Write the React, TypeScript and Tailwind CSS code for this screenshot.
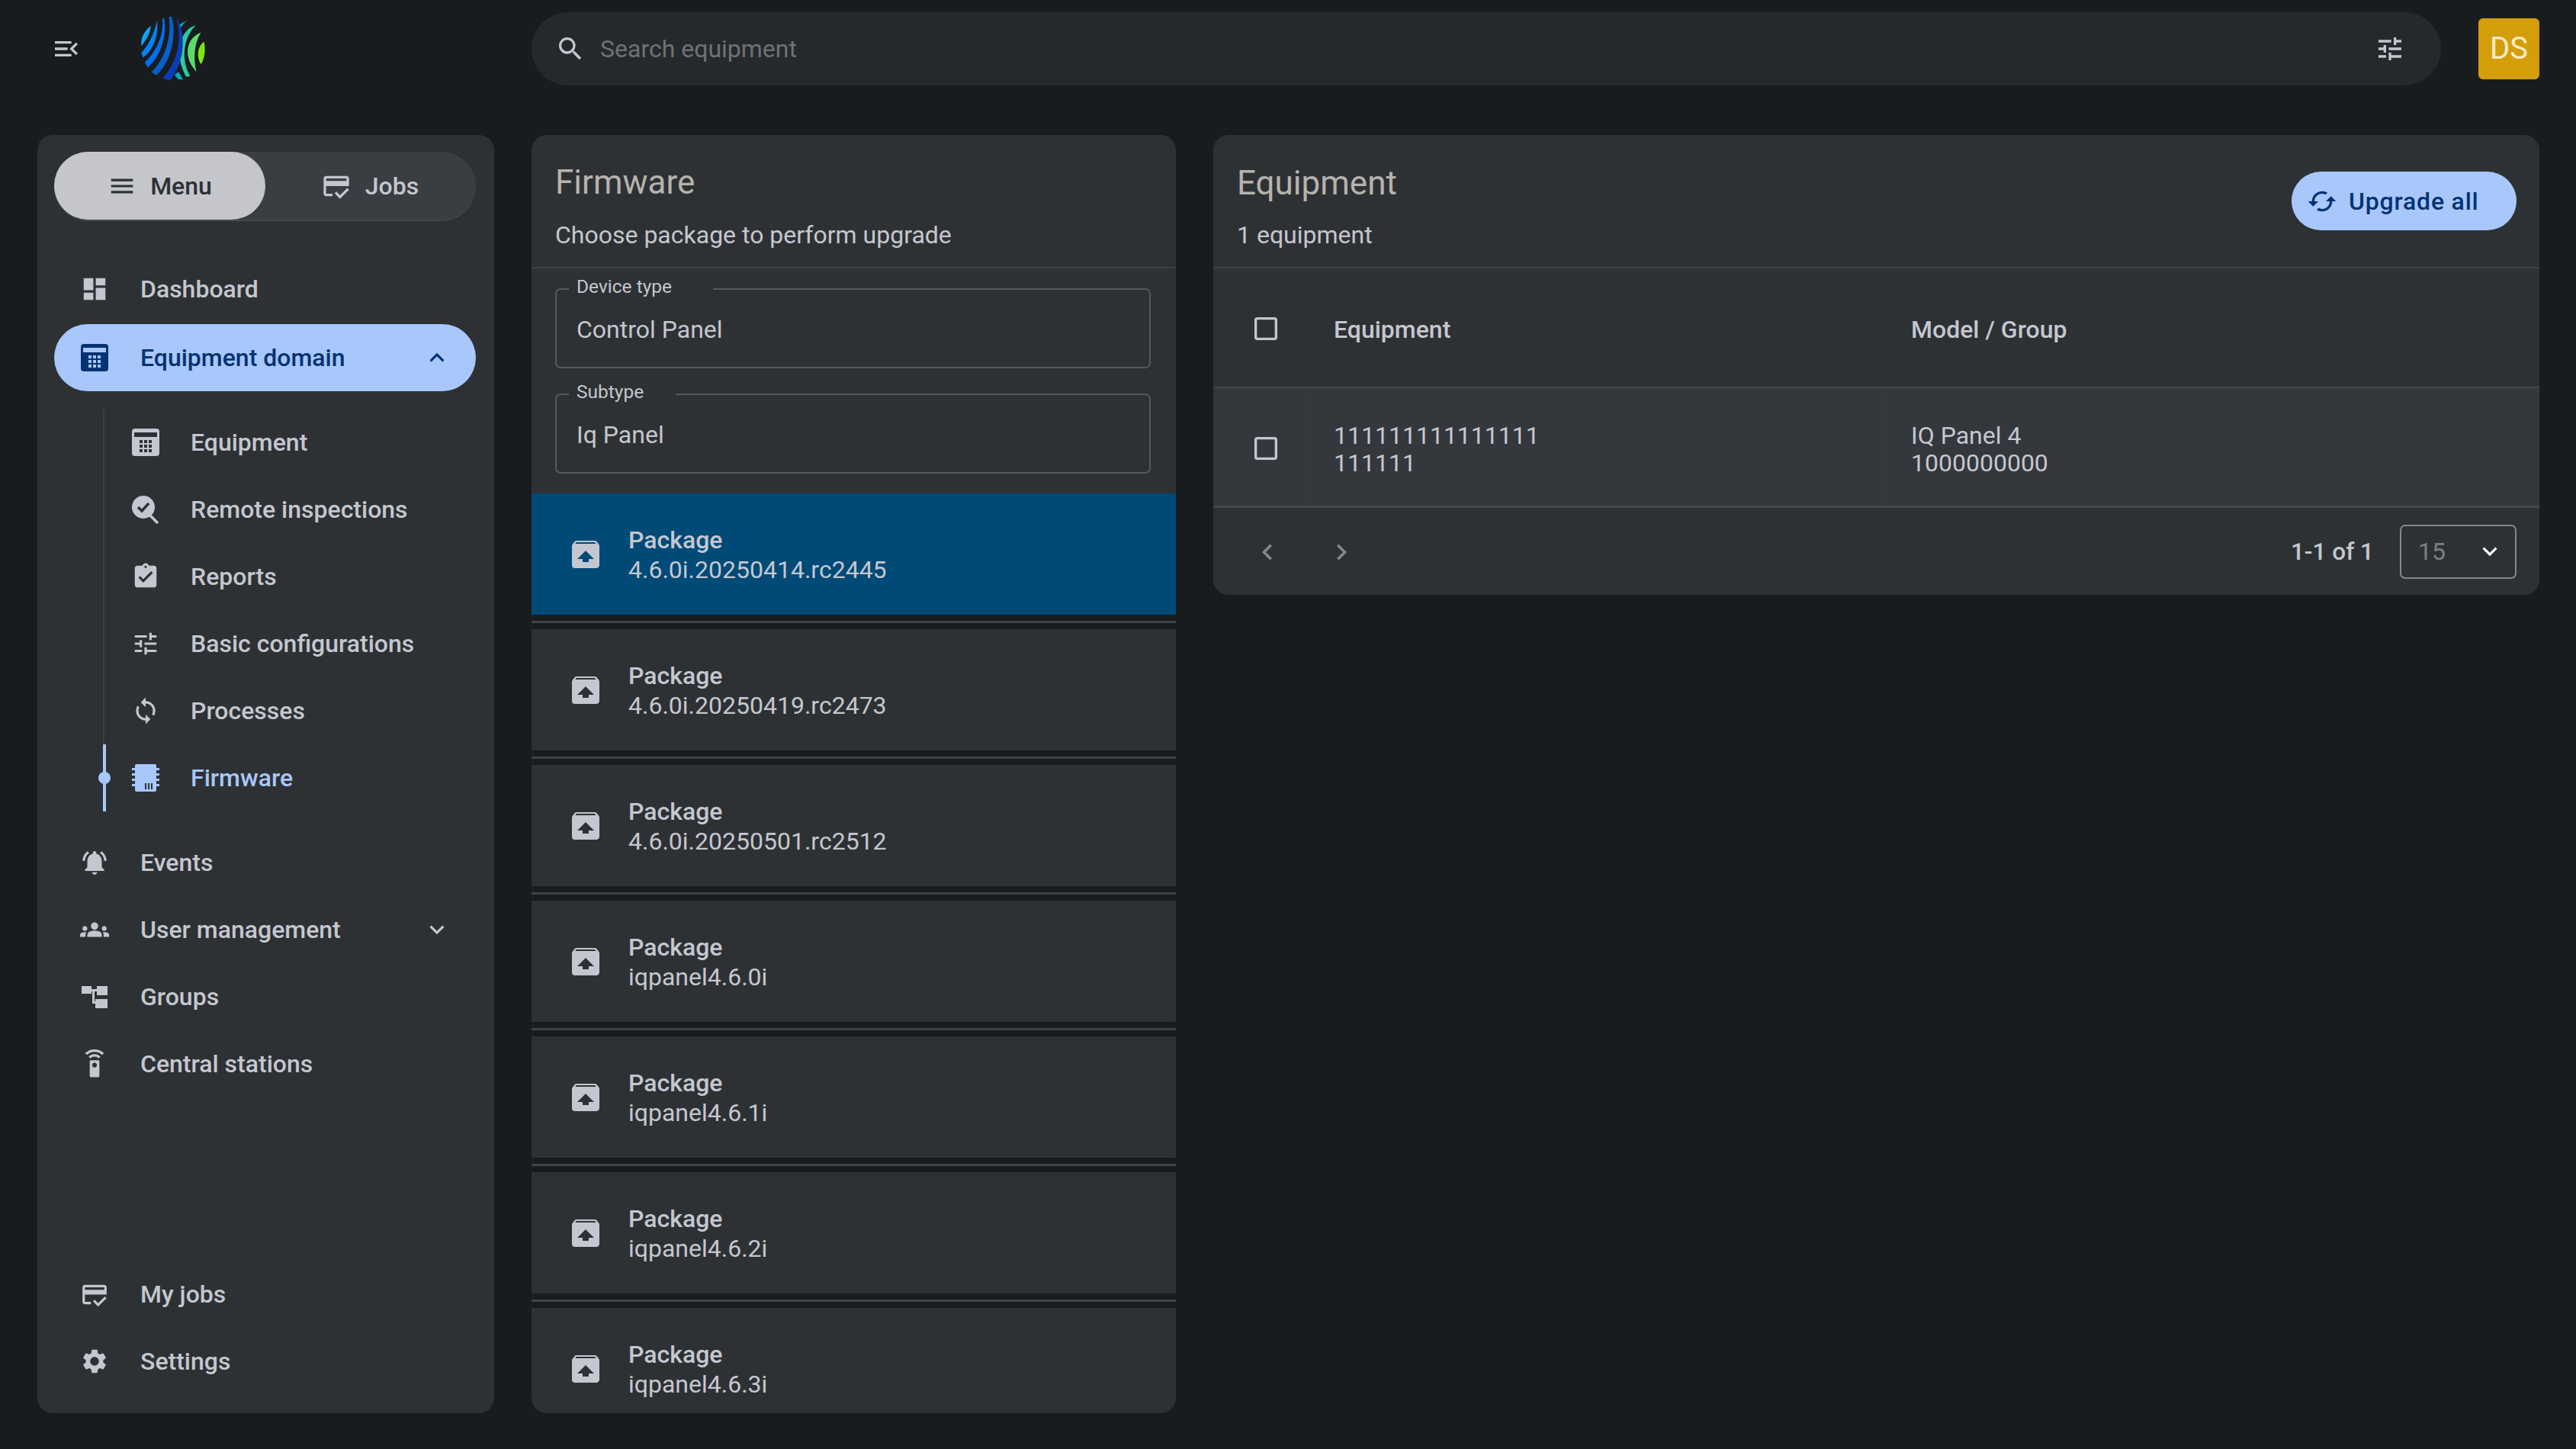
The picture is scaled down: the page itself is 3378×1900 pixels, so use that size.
import type { ReactNode } from "react";
import {
  MdMenu,
  MdMenuOpen,
  MdDashboard,
  MdAssignmentTurnedIn,
  MdTune,
  MdLoop,
  MdNotificationsActive,
  MdGroups,
  MdSettingsRemote,
  MdCreditScore,
  MdOutlineCreditScore,
  MdSettings,
  MdExpandLess,
  MdExpandMore,
  MdSearch,
  MdSync,
  MdUnarchive,
  MdChevronLeft,
  MdChevronRight,
  MdCheckBoxOutlineBlank,
} from "react-icons/md";

function Logo() {
  return (
    <svg width="86" height="86" viewBox="70 57 265 265">
      <path fill="#06a8b8" d="M230 90 L262 73 C248 82 238 95 232 108Z" />
      <path fill="#06a8b8" d="M208 295 L225 283 L243 314 L222 312Z" />
      <path fill="#2bc9a0" d="M293 95 C245 105 195 190 255 303 L272 300 C235 240 240 150 293 95Z" />
      <path fill="#5cd96a" d="M315 124 C255 145 240 225 297 282 C285 240 285 170 315 124Z" />
      <path fill="#7ee60f" d="M327 160 C297 185 298 225 315 252 C330 230 335 190 327 160Z" />
      <path fill="#0ea5f5" d="M113 97 C88 115 70 145 74 178 C97 150 110 125 113 97Z" />
      <path fill="#0082f5" d="M137 77 C125 130 105 170 75 205 L80 225 C125 195 146 130 137 77Z" />
      <path fill="#0070f0" d="M160 67 L167 67 C178 140 150 225 100 264 L88 245 C140 195 165 130 160 67Z" />
      <path fill="#0560c8" d="M185 60 L197 60 C218 140 195 240 135 297 L115 283 C170 230 198 140 185 60Z" />
      <path fill="#0a3cb8" d="M214 60 C258 130 250 240 190 317 L160 308 C225 240 240 140 214 60Z" />
    </svg>
  );
}

function EquipmentIcon({ color }: { color: string }) {
  return (
    <svg width="38" height="38" viewBox="0 0 38 38">
      <rect x="1" y="1" width="36" height="36" rx="4" fill="currentColor" />
      <rect x="4" y="6" width="30" height="6" fill={color} />
      <g fill={color}>
        <rect x="11" y="16" width="4" height="4" />
        <rect x="17" y="16" width="4" height="4" />
        <rect x="23" y="16" width="4" height="4" />
        <rect x="11" y="22" width="4" height="4" />
        <rect x="17" y="22" width="4" height="4" />
        <rect x="23" y="22" width="4" height="4" />
        <rect x="11" y="28" width="4" height="4" />
        <rect x="17" y="28" width="4" height="4" />
        <rect x="23" y="28" width="4" height="4" />
      </g>
    </svg>
  );
}

function InspectionIcon() {
  return (
    <svg width="38" height="38" viewBox="0 0 38 38">
      <circle cx="16" cy="16" r="15" fill="currentColor" />
      <path d="M24 26 L35 37" stroke="currentColor" strokeWidth="3.5" fill="none" />
      <path d="M9 16 L14 21 L23 11" stroke="#2e3134" strokeWidth="3.5" fill="none" />
    </svg>
  );
}

function ChipIcon() {
  return (
    <svg width="38" height="38" viewBox="0 0 38 38">
      <rect x="5" y="1" width="28" height="36" rx="2" fill="currentColor" />
      <g fill="currentColor">
        <rect x="1" y="6" width="36" height="3" />
        <rect x="1" y="13" width="36" height="3" />
        <rect x="1" y="20" width="36" height="3" />
        <rect x="1" y="27" width="36" height="3" />
      </g>
      <g fill="#2e3134">
        <rect x="18" y="26" width="2" height="8" />
        <rect x="22" y="26" width="2" height="8" />
        <rect x="26" y="26" width="2" height="8" />
      </g>
    </svg>
  );
}

function GroupsIcon() {
  return (
    <svg width="38" height="38" viewBox="0 0 38 38" fill="currentColor">
      <rect x="2" y="5" width="13" height="10" />
      <rect x="22" y="5" width="14" height="12" />
      <rect x="20" y="22" width="16" height="12" />
      <path d="M15 9 H22 V12 H19 V25 H20 V28 H16 V12 H15Z" />
    </svg>
  );
}

function NavItem({ icon, label, trailing }: { icon: ReactNode; label: string; trailing?: ReactNode }) {
  return (
    <div className="flex h-[88px] items-center pl-[34px] pr-[32px] text-[#c4c7d0]">
      <span className="flex w-[38px] justify-center">{icon}</span>
      <span className="ml-[41px] flex-1 text-[32px] font-medium">{label}</span>
      {trailing}
    </div>
  );
}

function SubItem({ icon, label, active }: { icon: ReactNode; label: string; active?: boolean }) {
  return (
    <div
      className={
        active
          ? "relative flex h-[88px] items-center border-l-[4px] border-[#a8c7fa] pl-[33px] text-[#a8c7fa]"
          : "flex h-[88px] items-center border-l-[2px] border-[#3a3d41] pl-[35px] text-[#c4c7d0]"
      }
    >
      {active && <span className="absolute left-[-10px] top-[36px] h-[16px] w-[16px] rounded-full bg-[#a8c7fa]" />}
      <span className="flex w-[38px] justify-center">{icon}</span>
      <span className="ml-[40px] text-[32px] font-medium">{label}</span>
    </div>
  );
}

function Sidebar() {
  return (
    <aside className="flex h-[1676px] w-[599px] flex-col rounded-[20px] bg-[#2e3134] pl-[22px] pr-[24px] pb-[24px] pt-[22px]">
      <div className="flex h-[91px] rounded-full border-b-[2px] border-[#44474b] bg-[#3a3d41]">
        <div className="flex h-[89px] w-[277px] items-center justify-center gap-[18px] rounded-full bg-[#c4c6cb] text-[#2d3035]">
          <MdMenu size={38} />
          <span className="text-[32px] font-medium">Menu</span>
        </div>
        <div className="flex flex-1 items-center justify-center gap-[18px] pr-[2px] text-[#c4c7d0]">
          <MdOutlineCreditScore size={40} />
          <span className="text-[32px] font-medium">Jobs</span>
        </div>
      </div>

      <div className="mt-[45px]">
        <NavItem icon={<MdDashboard size={40} />} label="Dashboard" />
      </div>
      <div className="mt-[2px] rounded-full bg-[#a8c7fa] text-[#043374]">
        <div className="flex h-[88px] items-center pl-[34px] pr-[32px]">
          <EquipmentIcon color="#a8c7fa" />
          <span className="ml-[41px] flex-1 text-[32px] font-medium">Equipment domain</span>
          <MdExpandLess size={38} />
        </div>
      </div>

      <div className="ml-[64px] mt-[23px]">
        <SubItem icon={<EquipmentIcon color="#2e3134" />} label="Equipment" />
        <SubItem icon={<InspectionIcon />} label="Remote inspections" />
        <SubItem icon={<MdAssignmentTurnedIn size={40} />} label="Reports" />
        <SubItem icon={<MdTune size={40} />} label="Basic configurations" />
        <SubItem icon={<MdLoop size={42} />} label="Processes" />
        <SubItem icon={<ChipIcon />} label="Firmware" active />
      </div>

      <div className="mt-[23px]">
        <NavItem icon={<MdNotificationsActive size={40} />} label="Events" />
        <NavItem icon={<MdGroups size={44} />} label="User management" trailing={<MdExpandMore size={38} />} />
        <NavItem icon={<GroupsIcon />} label="Groups" />
        <NavItem icon={<MdSettingsRemote size={42} />} label="Central stations" />
      </div>

      <div className="mt-auto">
        <NavItem icon={<MdCreditScore size={43} />} label="My jobs" />
        <NavItem icon={<MdSettings size={40} />} label="Settings" />
      </div>
    </aside>
  );
}

function Field({ label, value, legend }: { label: string; value: string; legend: string }) {
  return (
    <div className="relative flex h-[105px] items-center rounded-[7px] border-[2px] border-[#55585c] pl-[26px] pt-[3px] text-[32px] text-[#c4c7d0]">
      {value}
      <span className={`absolute left-[16px] top-[-20px] bg-[#2e3134] pl-[10px] text-[24.5px] leading-[32px] text-[#c4c7d0] ${legend}`}>
        {label}
      </span>
    </div>
  );
}

const packages = [
  "4.6.0i.20250414.rc2445",
  "4.6.0i.20250419.rc2473",
  "4.6.0i.20250501.rc2512",
  "iqpanel4.6.0i",
  "iqpanel4.6.1i",
  "iqpanel4.6.2i",
  "iqpanel4.6.3i",
];

function FirmwarePanel() {
  return (
    <section className="flex h-[1676px] w-[845px] flex-col overflow-hidden rounded-[20px] bg-[#2e3134]">
      <header className="h-[175px] shrink-0 border-b-[2px] border-[#3e4145] pl-[31px]">
        <h1 className="pt-[34px] text-[44px] leading-[56px] text-[#b5b3ae]">Firmware</h1>
        <p className="mt-[21px] text-[32px] leading-[40px] text-[#c4c7d0]">Choose package to perform upgrade</p>
      </header>
      <div className="flex shrink-0 flex-col gap-[33px] pl-[31px] pr-[33px] pt-[26px] pb-[26px]">
        <Field label="Device type" value="Control Panel" legend="pr-[54px]" />
        <Field label="Subtype" value="Iq Panel" legend="pr-[42px]" />
      </div>
      {packages.map((name, index) => (
        <div key={name} className="shrink-0">
          <div className={index === 0 ? "flex h-[159px] items-center bg-[#004a77] pl-[47px]" : "flex h-[159px] items-center pl-[47px]"}>
            <MdUnarchive size={48} className="text-[#c4c7d0]" />
            <div className="ml-[32px] pt-[2px] text-[32px] leading-[39px] text-[#c4c7d0]">
              <div className="font-medium">Package</div>
              <div>{name}</div>
            </div>
          </div>
          {index < packages.length - 1 && (
            <div className="flex h-[19px] items-center bg-[#181c1f]">
              <div className="h-[3px] w-full bg-[#3e4145]" />
            </div>
          )}
        </div>
      ))}
    </section>
  );
}

function Checkbox() {
  return <MdCheckBoxOutlineBlank size={40} className="text-[#c4c7d0]" />;
}

function EquipmentPanel() {
  return (
    <section className="h-[603px] flex-1 overflow-hidden rounded-[20px] bg-[#2e3134]">
      <header className="flex h-[175px] items-start justify-between border-b-[2px] border-[#3e4145] pl-[31px] pr-[30px]">
        <div>
          <h2 className="pt-[35px] text-[44px] leading-[56px] text-[#b5b3ae]">Equipment</h2>
          <p className="mt-[20px] text-[32px] leading-[40px] text-[#c4c7d0]">1 equipment</p>
        </div>
        <button className="mt-[48px] flex h-[77px] w-[295px] items-center rounded-full bg-[#a8c7fa] pl-[20px] text-[#043374]">
          <MdSync size={40} className="rotate-90" />
          <span className="ml-[15px] text-[32px] font-medium tracking-[0.8px]">Upgrade all</span>
        </button>
      </header>
      <div className="grid h-[157px] grid-cols-[125px_757px_1fr] items-stretch border-b-[2px] border-[#44474b]">
        <div className="flex items-center pl-[49px] pt-[3px]"><Checkbox /></div>
        <div className="flex items-center border-l border-r border-[#313437] pl-[32px] pt-[5px] text-[32px] font-medium text-[#c4c7d0]">Equipment</div>
        <div className="flex items-center pl-[33px] pt-[5px] text-[32px] font-medium text-[#c4c7d0]">Model / Group</div>
      </div>
      <div className="grid h-[157px] grid-cols-[125px_757px_1fr] items-stretch border-b-[3px] border-[#44474b] bg-[#34373c]">
        <div className="flex items-center pl-[49px] pt-[3px]"><Checkbox /></div>
        <div className="flex flex-col justify-center border-l border-r border-[#37393e] pl-[32px] pt-[6px] text-[32px] leading-[36px] text-[#c4c7d0]">
          <span>111111111111111</span>
          <span>111111</span>
        </div>
        <div className="flex flex-col justify-center pl-[33px] pt-[6px] text-[32px] leading-[36px] text-[#c4c7d0]">
          <span>IQ Panel 4</span>
          <span>1000000000</span>
        </div>
      </div>
      <footer className="flex h-[114px] items-center pl-[50px] pr-[30px]">
        <MdChevronLeft size={42} className="mt-[2px] text-[#85888c]" />
        <MdChevronRight size={42} className="ml-[55px] mt-[2px] text-[#85888c]" />
        <span className="ml-auto mt-[2px] text-[31.5px] font-medium text-[#c4c7d0]">1-1 of 1</span>
        <div className="ml-[34px] flex h-[71px] w-[153px] items-center justify-between rounded-[7px] border-[2px] border-[#85888c] pl-[22px] pr-[14px] text-[32px] text-[#7d8086]">
          15
          <MdExpandMore size={38} className="text-white" />
        </div>
      </footer>
    </section>
  );
}

export default function App() {
  return (
    <div className="flex h-[1900px] w-[3378px] flex-col overflow-hidden bg-[#181c1f] font-['Roboto',sans-serif]">
      <div className="flex h-[128px] shrink-0 items-center">
        <MdMenuOpen size={40} className="ml-[67px] text-[#c4c7d0]" />
        <div className="ml-[77px]"><Logo /></div>
        <div className="ml-[427px] flex h-[96px] w-[2504px] items-center rounded-full bg-[#26292c] pl-[31px] pr-[47px] text-[#c4c7d0]">
          <MdSearch size={40} />
          <span className="ml-[19px] flex-1 text-[32px] text-[#6f7276]">Search equipment</span>
          <MdTune size={40} />
        </div>
        <div className="ml-[49px] flex h-[80px] w-[80px] items-center justify-center rounded-[6px] bg-[#d49e0a] text-[40px] text-[#fdecc8]">DS</div>
      </div>
      <main className="flex gap-[49px] pl-[49px] pr-[48px] pt-[49px]">
        <Sidebar />
        <FirmwarePanel />
        <EquipmentPanel />
      </main>
    </div>
  );
}
